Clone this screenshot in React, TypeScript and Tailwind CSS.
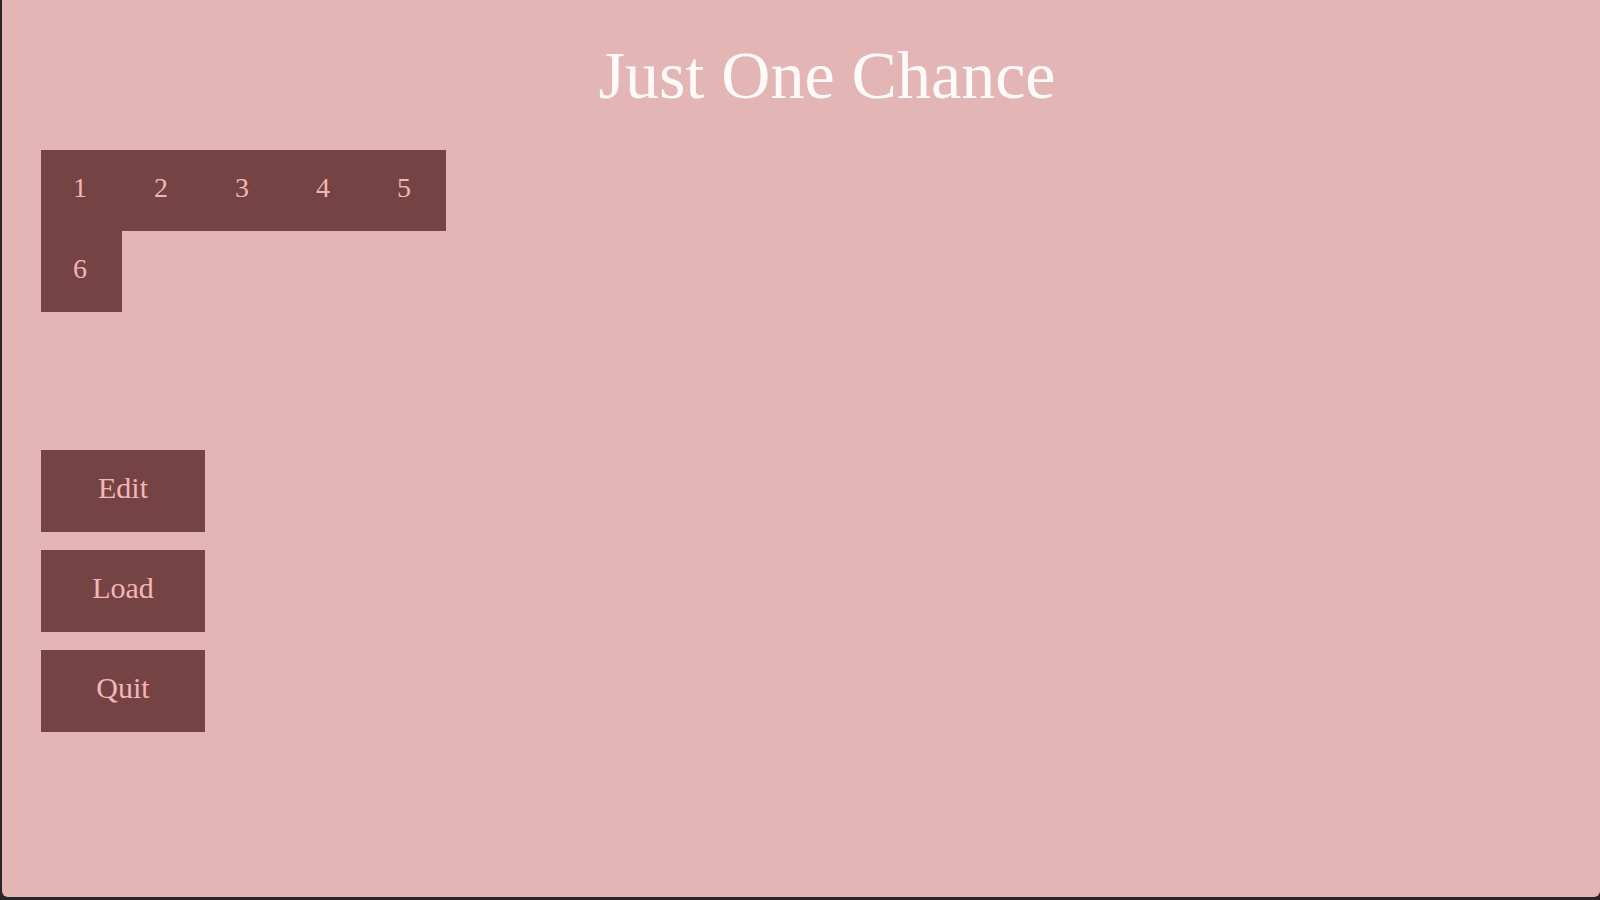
import React from "react";

const levels = [1, 2, 3, 4, 5, 6];
const menu = ["Edit", "Load", "Quit"];

export default function App() {
  return (
    <div className="w-[1600px] h-[900px] bg-[#262626] overflow-hidden">
      <div
        className="ml-[2px] h-[897px] bg-[#e3b5b5] rounded-b-[6px] px-[39px] pt-[41px]"
        style={{ fontFamily: '"Liberation Serif", "Times New Roman", serif' }}
      >
        <h1 className="pl-[52px] text-center text-[68px] leading-none text-[#fffafa] font-normal">
          Just One Chance
        </h1>

        {/* level select */}
        <div className="mt-[41px] grid grid-cols-5 w-[405px]">
          {levels.map((n) => (
            <button
              key={n}
              className="w-[81px] h-[81px] pb-[6px] pr-[3px] bg-[#754344] text-[#f3b6b6] text-[28px] leading-none flex items-center justify-center"
            >
              {n}
            </button>
          ))}
        </div>

        <div className="mt-[138px] flex flex-col gap-[18px]">
          {menu.map((label) => (
            <button
              key={label}
              className="w-[164px] h-[82px] pb-[6px] bg-[#754344] text-[#f3b6b6] text-[30px] leading-none flex items-center justify-center"
            >
              {label}
            </button>
          ))}
        </div>
      </div>
    </div>
  );
}
